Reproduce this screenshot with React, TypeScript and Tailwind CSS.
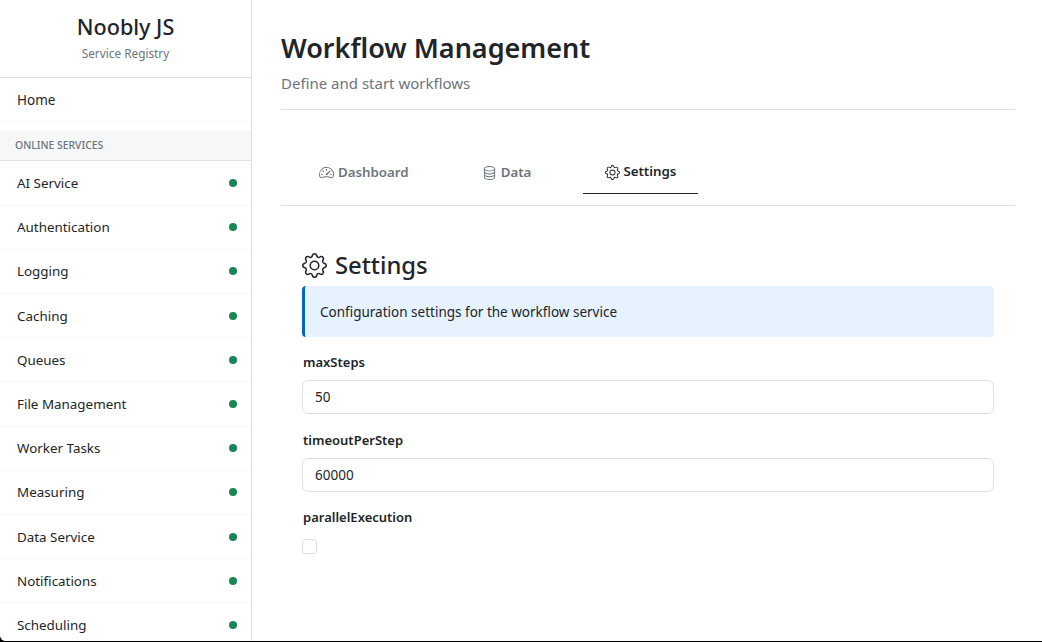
import React from "react";
import { BsDatabase, BsGear, BsSpeedometer2 } from "react-icons/bs";

const services = [
  "AI Service",
  "Authentication",
  "Logging",
  "Caching",
  "Queues",
  "File Management",
  "Worker Tasks",
  "Measuring",
  "Data Service",
  "Notifications",
  "Scheduling",
];

function Sidebar() {
  return (
    <aside className="w-[252px] shrink-0 h-full overflow-hidden border-r border-[#dee2e6] bg-white">
      <div className="h-[78px] border-b border-[#dee2e6] pt-[12px] text-center">
        <h1 className="text-[21.6px] leading-[30px] font-medium text-[#212529]">Noobly JS</h1>
        <p className="text-[11.8px] leading-[18px] mt-[2px] text-[#6c757d]">Service Registry</p>
      </div>
      <div className="h-[44.2px] flex items-center pt-[1px] px-[17px] border-b border-[#f8f9fa] text-[13.5px] text-[#212529]">
        Home
      </div>
      <div className="mt-[8px] h-[31.3px] flex items-center pt-[1px] px-[15px] bg-[#f6f7f9] border-b border-[#dee2e6] text-[10.4px] font-medium text-[#6c757d]">
        ONLINE SERVICES
      </div>
      {services.map((name) => (
        <div
          key={name}
          className="h-[44.2px] flex items-center justify-between pl-[17px] pr-[14px] border-b border-[#f8f9fa] text-[13.4px] text-[#212529]"
        >
          <span>{name}</span>
          <span className="w-2 h-2 rounded-full bg-[#198754]" />
        </div>
      ))}
    </aside>
  );
}

function Tabs() {
  return (
    <div className="mt-[32px] flex gap-[30px] pl-[16px] border-b border-[#dee2e6] h-[64px] text-[13.3px] font-semibold text-[#6c757d]">
      <div className="h-[52px] pt-[9px] pl-[22px] pr-[21px] flex items-center gap-[4px]">
        <BsSpeedometer2 className="text-[15px]" />
        Dashboard
      </div>
      <div className="h-[52px] pt-[9px] px-[22px] flex items-center gap-[4px]">
        <BsDatabase className="text-[15px]" />
        Data
      </div>
      <div className="h-[52px] pt-[9px] w-[115px] px-[22px] flex items-center gap-[3px] border-b border-[#212529] text-[#212529]">
        <BsGear className="text-[15px]" />
        Settings
      </div>
    </div>
  );
}

function Field({ label, value }: { label: string; value: string }) {
  return (
    <div>
      <div className="pl-[1px] text-[13px] leading-[20px] font-semibold text-[#212529]">{label}</div>
      <input
        readOnly
        value={value}
        className="mt-[8px] block w-full h-[34px] px-[12px] rounded-[6px] border border-[#dee2e6] text-[13.5px] text-[#212529] outline-none"
      />
    </div>
  );
}

export default function App() {
  return (
    <div className="h-[642px] w-[1042px] overflow-hidden bg-black">
      <div className="flex h-[641px] overflow-hidden rounded-bl-[6px] bg-white font-['Noto_Sans',sans-serif]">
        <Sidebar />
        <main className="flex-1 pl-[29px] pr-[27px]">
          <div className="h-[110px] pt-[28px] border-b border-[#dee2e6]">
            <h2 className="text-[27px] leading-[40px] font-semibold text-[#212529]">Workflow Management</h2>
            <p className="mt-[4px] text-[15px] leading-[22px] text-[#6c757d]">Define and start workflows</p>
          </div>
          <Tabs />
          <div className="px-[21px] pt-[42px]">
            <h3 className="flex items-center gap-[8px] h-[33px] pt-[2px] text-[23.8px] font-medium text-[#212529]">
              <BsGear className="text-[25px]" />
              Settings
            </h3>
            <div className="mt-[5px] h-[51px] flex items-center pt-[1px] pl-[15px] rounded-[4px] border-l-[3px] border-[#0066cc] bg-[#e6f2ff] text-[13.5px] text-[#212529]">
              Configuration settings for the workflow service
            </div>
            <div className="mt-[15px] flex flex-col gap-[16px]">
              <Field label="maxSteps" value="50" />
              <Field label="timeoutPerStep" value="60000" />
            </div>
            <div className="mt-[15px] pl-[1px] text-[13px] leading-[20px] font-semibold text-[#212529]">parallelExecution</div>
            <input
              type="checkbox"
              readOnly
              className="mt-[12px] block w-[15px] h-[15px] appearance-none rounded-[3px] border border-[#dee2e6] bg-white"
            />
          </div>
        </main>
      </div>
    </div>
  );
}
